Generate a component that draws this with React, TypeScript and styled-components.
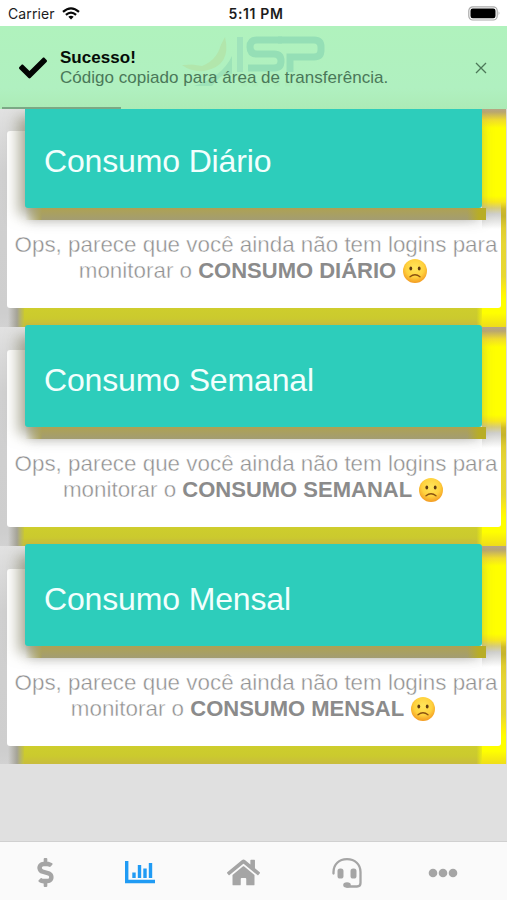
import React from 'react';
import styled, { createGlobalStyle } from 'styled-components';
import { FaCheck, FaDollarSign, FaHome } from 'react-icons/fa';

const GlobalStyle = createGlobalStyle`
  * { box-sizing: border-box; }
  body { margin: 0; background: #e0e0e0; font-family: "Liberation Sans", Arial, sans-serif; }
`;

const Screen = styled.div`
  width: 507px;
  height: 900px;
  display: flex;
  flex-direction: column;
  overflow: hidden;
  background: #e0e0e0;
`;

const StatusBar = styled.header`
  height: 26px;
  flex: none;
  display: grid;
  grid-template-columns: 1fr auto 1fr;
  align-items: center;
  padding: 1px 6px 0 8px;
  background: #fff;
  color: #1c1c1c;
  font-family: Inter, sans-serif;
  font-size: 14px;
`;

const Carrier = styled.div`
  display: flex;
  align-items: center;
  gap: 7px;
  letter-spacing: 0.1px;
`;

const Clock = styled.div`
  font-weight: 600;
  font-size: 14px;
  letter-spacing: 0.6px;
  padding-left: 3px;
`;

const Battery = styled.div`
  display: flex;
  justify-content: flex-end;
`;

const Toast = styled.section`
  position: relative;
  z-index: 1;
  height: 83px;
  flex: none;
  display: flex;
  align-items: center;
  padding: 0 19px;
  background: linear-gradient(#b0f2bd, #b0f0c0 75%, #acebb6);
`;

const Watermark = styled.svg`
  position: absolute;
  left: 178px;
  top: 4px;
`;

const ToastText = styled.div`
  position: relative;
  flex: 1;
  padding-left: 13px;
  font-size: 17px;
  line-height: 19.5px;
  letter-spacing: 0.03px;
  color: #4a7859;
  white-space: nowrap;
`;

const ToastTitle = styled.div`
  font-weight: 700;
  color: #050c07;
`;

const Close = styled.button`
  display: flex;
  padding: 0;
  border: 0;
  background: none;
`;

const Progress = styled.div`
  position: absolute;
  left: 2px;
  bottom: 0;
  width: 119px;
  height: 2px;
  background: #7ba885;
`;

const Content = styled.main`
  flex: 1;
  min-height: 0;
  overflow: hidden;
`;

const Sections = styled.div`
  margin-top: -1px;
`;

const Section = styled.section`
  height: 219px;
  padding: 23px 6px 0 7px;
  background:
    linear-gradient(#dadada, #dadada) 506px 0 / 1px 100% no-repeat,
    linear-gradient(#b5a58a 0, #b9a670 4px, #f0dc2c 12px, #ffff00 20px, #ffff00 88px, #f8e71c 94px, #cfba2a 101px, #c6b42c 108px, #e0cd30 120px, #e6d634 135px, #e8d832 168px, #fff20c 184px, #ffff00 191px, #ffff00 205px, #eedb1c 219px) 482px 0 / 24px 219px no-repeat,
    linear-gradient(90deg, rgba(255,255,0,0), rgba(255,255,0,0) 30%, #ffff00) 473px 196px / 12px 23px no-repeat,
    linear-gradient(#cfcf2c, #cbca2e 14px, #c8ba40 23px) 24px 196px / 458px 23px no-repeat,
    linear-gradient(90deg, rgba(200,200,200,0) 8px, #a5a397 17px, #c6c43b 24px) 0 196px / 24px 23px no-repeat,
    linear-gradient(#e2e2e2 0, #d9d9d9 30px, #d0d0d0 65px, #cecece 205px, #d2d2d2 219px);
  &:last-child { height: 218px; }
`;

const Card = styled.article`
  height: 177px;
  padding: 0 19px 0 18px;
  border-radius: 3px;
  background:
    linear-gradient(#ffff00 0 65px, #f8e71c 71px, #d8cd78 77px, #cfcfcc 83px, #ffffff 98px) 475px 0 / 19px 100px no-repeat,
    #fff;
`;

const CardHeader = styled.h2`
  position: relative;
  top: -25px;
  height: 102px;
  width: 457px;
  margin: 0 0 -25px;
  padding: 8px 0 0 19px;
  border-radius: 3px;
  display: flex;
  align-items: center;
  background: #2dcdbb;
  box-shadow:
    -9px 9px 14px -2px rgba(120, 118, 85, 0.55),
    2px 15px 12px -2px rgba(140, 140, 140, 0.45);
  color: #f2fffd;
  font-size: 32px;
  font-weight: 400;
  letter-spacing: -0.15px;
`;

const HeaderShadow = styled.div`
  position: relative;
  height: 12px;
  margin: 0 -4px 16px 0;
  background:
    linear-gradient(90deg, rgba(184,173,38,0) 442px, #b8ad26 454px),
    linear-gradient(90deg, rgba(173,165,90,0) 0, #aaa260 16px, rgba(170,162,96,0) 17px),
    linear-gradient(#aea253, #a39d72) 16px 0 / 445px 12px no-repeat;
`;

const Message = styled.p`
  position: relative;
  height: 52px;
  margin: -4px -19px 0 -18px;
  padding-left: 4px;
  color: #909090;
  font-size: 22.4px;
  line-height: 26px;
  -webkit-text-stroke: 0.4px #fff;
`;

const MessageLine = styled.span`
  display: flex;
  align-items: center;
  justify-content: center;
  white-space: pre;
  & + & { margin-left: -5px; }
`;

const Strong = styled.strong`
  color: #8b8b8b;
  font-size: 22px;
  -webkit-text-stroke: 0;
`;

const Emoji = styled.svg`
  margin-left: 6px;
`;

const TabBar = styled.nav`
  height: 59px;
  flex: none;
  display: grid;
  grid-template-columns: 91px 98px 108px 100px 91px;
  border-top: 1px solid #d0d0d0;
  background: #fafafa;
  padding-top: 3px;
`;

const Tab = styled.button<{ $active?: boolean }>`
  display: flex;
  align-items: center;
  justify-content: center;
  padding: 0;
  border: 0;
  background: none;
  color: ${({ $active }) => ($active ? '#209bf4' : '#a5a5a5')};
`;

const SadFace = () => (
  <Emoji width="26" height="26" viewBox="0 0 26 26">
    <defs>
      <radialGradient id="face" cx="50%" cy="38%" r="62%">
        <stop offset="0" stopColor="#ffe65c" />
        <stop offset=".6" stopColor="#ffd23e" />
        <stop offset="1" stopColor="#f39b22" />
      </radialGradient>
    </defs>
    <circle cx="13" cy="13" r="12" fill="url(#face)" />
    <ellipse cx="8.8" cy="10.5" rx="1.4" ry="2.1" fill="#613c12" />
    <ellipse cx="17.2" cy="10.5" rx="1.4" ry="2.1" fill="#613c12" />
    <path d="M8 18.8Q13 14.7 18 18.8" fill="none" stroke="#8a5210" strokeWidth="1.3" strokeLinecap="round" />
  </Emoji>
);

const periods = [
  { title: 'Consumo Diário', label: 'CONSUMO DIÁRIO' },
  { title: 'Consumo Semanal', label: 'CONSUMO SEMANAL' },
  { title: 'Consumo Mensal', label: 'CONSUMO MENSAL' },
];

export default function App() {
  return (
    <Screen>
      <GlobalStyle />
      <StatusBar>
        <Carrier>
          Carrier
          <svg width="18" height="13" viewBox="0 0 18 13" fill="none" stroke="#080808" strokeWidth="2.2">
            <path d="M1 4.9Q9-2.1 17 4.9M3.9 7.9Q9 3.5 14.1 7.9" />
            <path d="M9 12.5L6.3 9.8Q9 7.6 11.7 9.8Z" fill="#080808" stroke="none" />
          </svg>
        </Carrier>
        <Clock>5:11 PM</Clock>
        <Battery>
          <svg width="33" height="15" viewBox="0 0 33 15">
            <rect x=".8" y=".8" width="28.4" height="13.2" rx="4" fill="#fff" stroke="#aaa" strokeWidth="1.2" />
            <rect x="2.5" y="2.5" width="25" height="9.8" rx="2.2" fill="#000" />
            <path d="M30.7 5.2Q32.5 7.4 30.7 9.5Z" fill="#999" />
          </svg>
        </Battery>
      </StatusBar>
      <Toast>
        <Watermark width="150" height="62" viewBox="0 0 150 62" fill="none">
          <path d="M4 35Q34 36 47 7Q54 36 26 41Q13 42 4 35Z" fill="#b2e6ac" />
          <path d="M4 33Q34 33 44 8Q42 29 24 36Z" fill="#b0f1be" />
          <path d="M16 56Q44 47 54 26L54 44Q44 42 34 56Z" fill="#9de3b8" />
          <path d="M62 7V42" stroke="#9fe3bb" strokeWidth="6" />
          <path d="M104 10H79Q72 10 72 17T79 24H96Q103 24 103 31T96 38H70" stroke="#95dfb6" strokeWidth="7" />
          <path d="M100 10H136Q143 10 143 17V20Q143 27 136 27H112V42" stroke="#95dfb6" strokeWidth="7" />
          <path d="M63 54H145" stroke="#aeedbb" strokeWidth="5" strokeDasharray="6 5" />
        </Watermark>
        <FaCheck size={28} color="#020503" />
        <ToastText>
          <ToastTitle>Sucesso!</ToastTitle>
          Código copiado para área de transferência.
        </ToastText>
        <Close aria-label="Fechar">
          <svg width="14" height="12" viewBox="0 0 14 12" stroke="#4d7859" strokeWidth="1.3">
            <path d="M2 1L12 11M12 1L2 11" />
          </svg>
        </Close>
        <Progress />
      </Toast>
      <Content>
        <Sections>
          {periods.map(({ title, label }) => (
            <Section key={title}>
              <Card>
                <CardHeader>{title}</CardHeader>
                <HeaderShadow />
                <Message>
                  <MessageLine>Ops, parece que você ainda não tem logins para</MessageLine>
                  <MessageLine>monitorar o <Strong>{label}</Strong><SadFace /></MessageLine>
                </Message>
              </Card>
            </Section>
          ))}
        </Sections>
      </Content>
      <TabBar>
        <Tab aria-label="Financeiro"><FaDollarSign size={29} /></Tab>
        <Tab aria-label="Consumo" $active>
          <svg width="30" height="23" viewBox="0 0 30 23" fill="none" stroke="currentColor" strokeWidth="3.4">
            <path d="M1.7 0V20.5H30M9 11.5V17M14.5 4V17M20 7.5V17M25.5 2V17" />
          </svg>
        </Tab>
        <Tab aria-label="Início"><FaHome size={33} /></Tab>
        <Tab aria-label="Suporte">
          <svg width="30" height="30" viewBox="0 0 30 30" fill="none" stroke="currentColor" strokeWidth="2.3" strokeLinecap="round">
            <path d="M1.5 15.5V14C1.5 6.5 7 1.2 15 1.2S28.5 6.5 28.5 14V25Q28.5 28.5 25 28.5H15" />
            <rect x="5.5" y="10.5" width="6" height="10" rx="2.6" fill="currentColor" stroke="none" />
            <rect x="18.5" y="10.5" width="6" height="10" rx="2.6" fill="currentColor" stroke="none" />
            <ellipse cx="15" cy="27" rx="3.8" ry="2.8" fill="currentColor" stroke="none" />
          </svg>
        </Tab>
        <Tab aria-label="Mais">
          <svg width="30" height="10" viewBox="0 0 30 10" fill="currentColor">
            <circle cx="5" cy="5" r="4.3" /><circle cx="15" cy="5" r="4.3" /><circle cx="25" cy="5" r="4.3" />
          </svg>
        </Tab>
      </TabBar>
    </Screen>
  );
}
